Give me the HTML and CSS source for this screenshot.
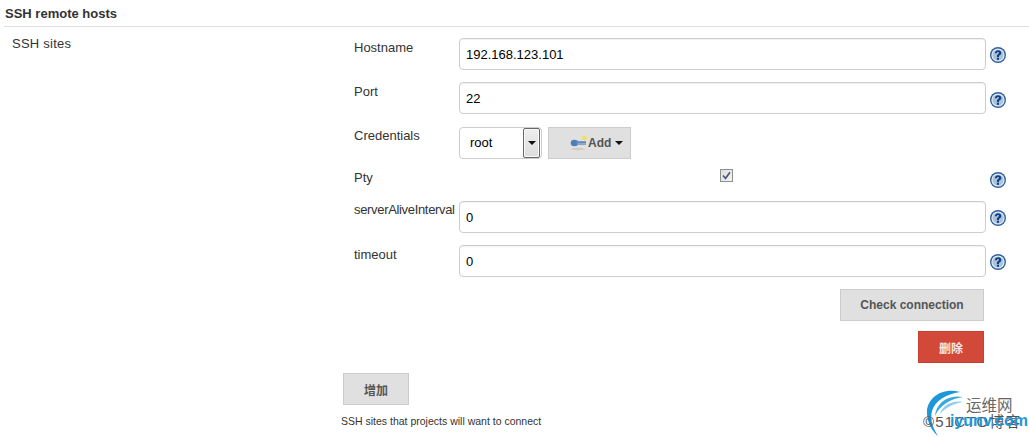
FILE: index.html
```html
<!DOCTYPE html>
<html lang="en">
<head>
<meta charset="utf-8">
<title>SSH remote hosts</title>
<link rel="stylesheet" href="styles.css">
</head>
<body>
<svg class="defs" width="0" height="0" aria-hidden="true">
  <symbol id="help" viewBox="0 0 16 16">
    <circle cx="8" cy="8" r="8" fill="#2f5f9e"/>
    <circle cx="8" cy="8" r="6.600" fill="#eaf1f8"/>
    <circle cx="8" cy="8" r="5.600" fill="#a9c3de"/>
    <path d="M4.900 6.200C5 4.300 6.300 3.200 8.100 3.200c1.900 0 3.200 1.100 3.200 2.700 0 1.100-.6 1.700-1.500 2.400-.6.400-.8.700-.8 1.300v.4H6.900V9.200c0-1.100.4-1.700 1.200-2.300.6-.4.900-.7.900-1.100 0-.5-.4-.9-.9-.9-.7 0-1.100.4-1.200 1.300z" fill="#123f80"/>
    <rect x="6.900" y="10.700" width="2.100" height="2.100" fill="#123f80"/>
  </symbol>
</svg>
<h2 class="section-title">SSH remote hosts</h2>
<div class="layout">
  <div class="main-label">SSH sites</div>
  <div class="content">
    <div class="row row-host">
      <label class="row-label">Hostname</label>
      <div class="field"><input class="text-input" type="text" value="192.168.123.101"></div>
      <svg class="help"><use href="#help"/></svg>
    </div>
    <div class="row">
      <label class="row-label">Port</label>
      <div class="field"><input class="text-input" type="text" value="22"></div>
      <svg class="help"><use href="#help"/></svg>
    </div>
    <div class="row row-cred">
      <label class="row-label">Credentials</label>
      <div class="field cred">
        <div class="select"><span class="select-value">root</span><span class="select-arrow"><i class="caret"></i></span></div>
        <button class="btn add-btn" type="button">
          <svg class="key" viewBox="0 0 18 16" width="18" height="16">
            <circle cx="14.500" cy="3" r="2.300" fill="#f7e04c"/>
            <ellipse cx="8" cy="14" rx="7" ry="1.200" fill="#cfcac2"/>
            <ellipse cx="4.500" cy="8" rx="3.800" ry="3.300" fill="#4f7db5"/>
            <rect x="6" y="6.200" width="10" height="2" fill="#5c8ac0"/>
            <rect x="7" y="8.200" width="9" height="1.700" fill="#7f9fc4"/>
          </svg>
          <span>Add</span><i class="caret"></i>
        </button>
      </div>
    </div>
    <div class="row row-pty">
      <label class="row-label">Pty</label>
      <div class="field check-field">
        <span class="checkbox"><svg viewBox="0 0 11 11" width="11" height="11"><path d="M2 5.500l2.500 2.800L9 2.300" fill="none" stroke="#4a5a78" stroke-width="1.700"/></svg></span>
      </div>
      <svg class="help"><use href="#help"/></svg>
    </div>
    <div class="row row-alive">
      <label class="row-label">serverAliveInterval</label>
      <div class="field"><input class="text-input" type="text" value="0"></div>
      <svg class="help"><use href="#help"/></svg>
    </div>
    <div class="row row-timeout">
      <label class="row-label">timeout</label>
      <div class="field"><input class="text-input" type="text" value="0"></div>
      <svg class="help"><use href="#help"/></svg>
    </div>
    <div class="actions">
      <button class="btn check-btn" type="button">Check connection</button>
      <button class="btn delete-btn" type="button">删除</button>
    </div>
    <button class="btn plus-btn" type="button">增加</button>
    <p class="description">SSH sites that projects will want to connect</p>
  </div>
</div>
<div class="watermark">
  <svg class="wm-logo" viewBox="0 0 42 48" width="42" height="48">
    <path d="M34 3C15-2 0 10 1 25c.5 9 5 17 11 22C6 38 4 30 6 22 9 12 20 5 34 3z" fill="#1e97d8"/>
    <path d="M37 8C22 5 10 14 9 27c5-11 15-17 28-19z" fill="#3aa8e0"/>
    <path d="M37 13C26 11 16 17 14 25c6-7 13-10 23-12z" fill="#8fcdee"/>
  </svg>
  <span class="wm-cn">运维网</span>
  <span class="wm-blog">©51CTO博客</span>
  <span class="wm-url">iyunv.com</span>
</div>
</body>
</html>
```
FILE: styles.css
```css
* { box-sizing: border-box; }
html, body { margin: 0; padding: 0; }
body {
  width: 1029px;
  height: 437px;
  overflow: hidden;
  position: relative;
  background: #fff;
  color: #333;
  font-family: "Liberation Sans", Arial, sans-serif;
  font-size: 13px;
}
.defs { position: absolute; }
.section-title {
  margin: 0 0 0 4px;
  height: 27px;
  padding: 6px 0 0 1px;
  border-bottom: 1px solid #ddd;
  font-size: 13px;
  line-height: 15px;
  font-weight: bold;
  color: #333;
}
.layout { display: flex; }
.main-label {
  width: 354px;
  padding: 9px 0 0 12px;
  line-height: 15px;
  letter-spacing: .25px;
}
.content { padding-top: 11px; width: 660px; }
.row {
  display: flex;
  align-items: flex-start;
  height: 32px;
  margin-bottom: 12px;
}
.row-label { width: 105px; padding-top: 2px; line-height: 15px; white-space: nowrap; flex: none; }
.field { width: 527px; flex: none; }
.text-input {
  display: block;
  width: 100%;
  height: 32px;
  padding: 0 6px;
  border: 1px solid #ccc;
  border-radius: 4px;
  background: #fff;
  font: 13px/20px "Liberation Sans", Arial, sans-serif;
  color: #000;
  box-shadow: inset 0 1px 1px rgba(0,0,0,.06);
}
.help { width: 16px; height: 16px; margin: 10px 0 0 4px; flex: none; }
.row-host .help, .row-alive .help, .row-timeout .help { margin-top: 9px; }
.row-cred { margin-top: 13px; }
.row-cred .row-label { padding-top: 1px; }
.cred { display: flex; gap: 6px; }
.select {
  display: flex;
  width: 83px;
  height: 32px;
  border: 1px solid #ccc;
  border-radius: 4px;
  background: #fff;
  padding-right: 1px;
}
.select-value {
  flex: 1;
  padding-left: 10px;
  line-height: 30px;
  font-size: 13px;
  color: #000;
}
.select-arrow {
  width: 17px;
  height: 30px;
  border: 1px solid #666;
  border-radius: 2px;
  background: linear-gradient(#eee, #ddd);
  display: flex;
  align-items: center;
  justify-content: center;
  box-shadow: inset 0 0 0 1px #fafafa;
}
.caret {
  width: 0;
  height: 0;
  border-left: 4px solid transparent;
  border-right: 4px solid transparent;
  border-top: 4px solid #111;
  display: inline-block;
}
.btn {
  display: block;
  height: 32px;
  padding: 0;
  border: 1px solid #ccc;
  background: #e0e0e0;
  color: #555;
  font: bold 12px "Liberation Sans", "Noto Sans CJK SC", Arial, sans-serif;
}
.add-btn {
  width: 83px;
  display: flex;
  align-items: center;
  padding-left: 21px;
}
.add-btn span { margin: 0 4px 0 0; }
.key { flex: none; }
.row-pty { height: 19px; margin-bottom: 13px; margin-top: -2px; }
.row-pty .help { margin-top: 3px; }
.row-pty .row-label { padding-top: 1px; }
.check-field { padding: 0 0 0 261px; }
.checkbox {
  display: flex;
  align-items: center;
  justify-content: center;
  width: 13px;
  height: 13px;
  border: 1px solid #8e8f8f;
  background: linear-gradient(135deg, #dcdcdc, #f4f4f4);
}
.row-alive .row-label { padding-top: 1px; letter-spacing: -.33px; }
.actions {
  width: 630px;
  display: flex;
  flex-direction: column;
  align-items: flex-end;
  gap: 10px;
}
.check-btn { width: 144px; }
.delete-btn {
  width: 66px;
  background: #d24939;
  border-color: #c9402f;
  color: #f7e6e6;
}
.plus-btn {
  width: 66px;
  margin: 10px 0 0 -11px;
}
.description {
  margin: 10px 0 0 -13px;
  font-size: 10.500px;
  line-height: 12px;
  color: #333;
}
.watermark {
  position: absolute;
  left: 926px;
  top: 389px;
  width: 103px;
  height: 48px;
}
.wm-logo { position: absolute; left: 0; top: 0; }
.wm-cn {
  position: absolute;
  left: 40px;
  top: 4px;
  font: 15.500px/22px "Noto Sans CJK SC", sans-serif;
  color: #666;
}
.wm-blog {
  position: absolute;
  left: -3px;
  top: 23px;
  font: 15px/20px "Liberation Sans", "Noto Sans CJK SC", sans-serif;
  letter-spacing: 1.200px;
  color: #555;
  white-space: nowrap;
}
.wm-url {
  position: absolute;
  left: 24px;
  top: 22px;
  font: bold 16px/20px "Liberation Sans", sans-serif;
  color: #1e97d8;
  white-space: nowrap;
}
```
